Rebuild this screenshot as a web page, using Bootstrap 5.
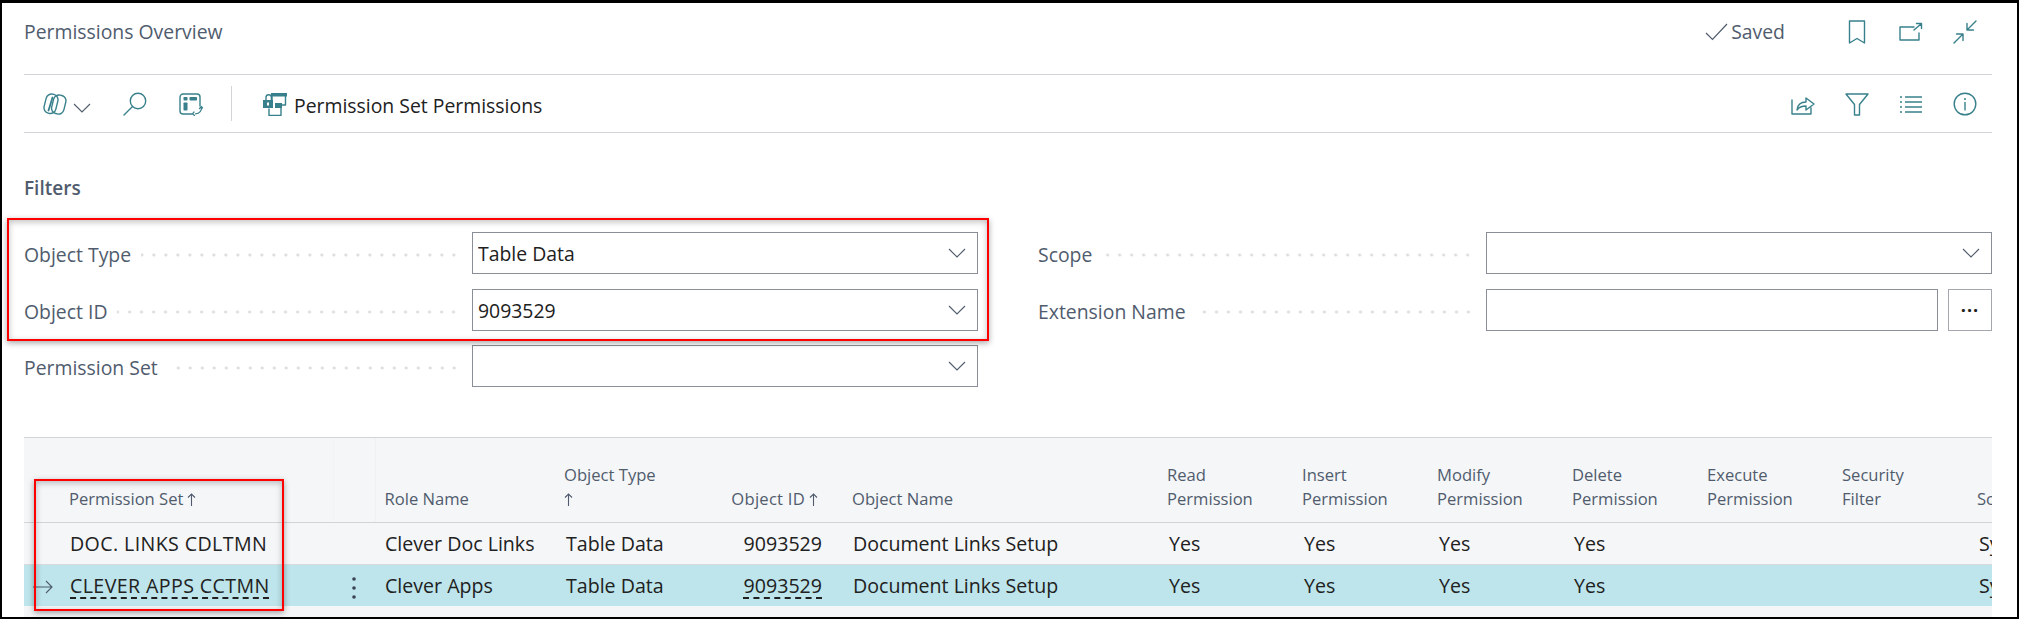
<!DOCTYPE html>
<html lang="en">
<head>
<meta charset="utf-8">
<title>Permissions Overview</title>
<link href="https://cdn.jsdelivr.net/npm/bootstrap@5.3.0/dist/css/bootstrap.min.css" rel="stylesheet">
<style>
html,body{margin:0;height:619px;overflow:hidden;background:#fff}
body{font-family:"Open Sans","Noto Sans",sans-serif;font-size:19.4px;color:#212121}
.bc-frame{position:relative;height:619px;box-sizing:border-box;border:solid #000;border-width:3px 2px 2px 2px;padding:0 25px 0 22px;display:flex;flex-direction:column;overflow:hidden;background:#fff}
.bc-ico{width:24px;height:24px;flex:none;fill:none;stroke:#38808b;stroke-width:1.4;stroke-linecap:round;stroke-linejoin:round}
.bc-ico .solid{fill:#38808b;stroke:none}
.bc-title-row{height:72px;border-bottom:1px solid #d2d4d8;padding-top:16px}
.bc-title{font-size:19.4px;line-height:26px;color:#505c6d}
.bc-saved{color:#505c6d;line-height:26px;margin-right:60px}
.bc-check{width:23px;height:18px;fill:none;stroke:#505c6d;stroke-width:1.2;margin-right:3px}
.bc-iconset{gap:30px;margin-right:15px}
.bc-tool-row{height:58px;border-bottom:1px solid #d2d4d8;padding-left:19px}
.bc-chev{width:18px;height:10px;fill:none;stroke:#505c6d;stroke-width:1.1;margin:8px 32px 0 6px}
.bc-gap{margin-left:32px}
.bc-sep{width:1px;height:35px;background:#d2d4d8;margin:0 31px 0 28px}
.bc-action{color:#212121;line-height:26px;margin:4px 0 0 7px}
.bc-h{font-size:19px;font-weight:600;color:#505c6d;line-height:26px;margin:42px 0 31px}
.bc-filters{gap:60px}
.bc-fcol{width:954px;gap:14.5px}
.bc-field{height:42px}
.bc-label{color:#505c6d;line-height:42px;margin-top:2px;white-space:nowrap}
.bc-dots{flex:1 1 auto;margin:4px 12px 0 10px;background:radial-gradient(circle,#dcdcdc 1.4px,transparent 1.7px) right center/12px 100% repeat-x}
.bc-select,.bc-input{width:506px;height:42px;flex:none;border:1px solid #8a8e96;border-radius:0;padding:2px 34px 0 5px;font-size:19.4px;color:#212121;box-shadow:none}
.bc-select{background-image:url("data:image/svg+xml,%3Csvg xmlns='http://www.w3.org/2000/svg' viewBox='0 0 18 10'%3E%3Cpath d='M1 1l8 8 8-8' fill='none' stroke='%23505c6d' stroke-width='1.1'/%3E%3C/svg%3E");background-position:right 11px center;background-size:18px 10px}
.bc-input-short{width:452px}
.bc-more{width:44px;height:42px;margin-left:10px;border:1px solid #a4a7ad;border-radius:0;padding:0;line-height:1;font-size:18px;font-weight:700;letter-spacing:1px;color:#212121;background:#fff}
.bc-grid{margin-top:50px;flex:1 1 auto;overflow:hidden;background:#f5f6f8;border-top:1px solid #d2d4d8}
.bc-table{--bs-table-bg:transparent;table-layout:fixed;width:2081px;margin:0;color:#212121}
.bc-table th{height:84px;vertical-align:bottom;font-weight:400;font-size:16.6px;line-height:24px;color:#505c6d;padding:0 8px 11px 7px;border:0;border-bottom:1px solid #d2d4d8}
.bc-table td{height:42px;vertical-align:middle;font-size:19.6px;line-height:24px;padding:2px 9px 0;border:0;border-bottom:1px solid #d8dade;white-space:nowrap;overflow:hidden}
.bc-table .bc-sel>td{--bs-table-bg:#bde5eb;border-bottom:0}
.bc-table th.bc-rule{border-left:1px solid #eef0f2;padding-left:9px}
.bc-table th.bc-rule-faint{border-left:1px solid #f2f3f6}
.bc-table .bc-mark{padding:3px 0 0 9px}
.bc-table .bc-num{text-align:right;padding-right:22px}
.bc-table th.bc-numh{text-align:right;padding-right:26px;white-space:nowrap;letter-spacing:.25px}
.bc-table th.bc-perm{padding-left:8px}
.bc-table td.bc-caps{letter-spacing:.4px}
.bc-table td.bc-first{padding-left:10px}
.bc-table .bc-menu{padding:3px 0 0;text-align:center}
.bc-up{width:9px;height:13px;fill:none;stroke:#505c6d;stroke-width:1.1;margin-left:4px;vertical-align:-1px}
.bc-link{text-decoration:underline dashed 1.5px #212121;text-underline-offset:4px}
.bc-arrow{width:20px;height:14px;fill:none;stroke:#505c6d;stroke-width:1.1;display:block}
.bc-kebab{width:4px;height:22px;fill:#3a4350;display:inline-block;vertical-align:middle}
.bc-callout{position:absolute;border:2px solid #f00;box-shadow:0 2px 6px rgba(0,0,0,.35),inset 0 2px 6px rgba(0,0,0,.25);pointer-events:none}
.bc-callout-a{left:5px;top:215px;width:982px;height:123px}
.bc-callout-b{left:32px;top:476px;width:250px;height:132px}
</style>
</head>
<body>
<div class="bc-frame">
  <div class="bc-title-row d-flex justify-content-between align-items-start">
    <div class="bc-title">Permissions Overview</div>
    <div class="d-flex align-items-center">
      <svg class="bc-check" viewBox="0 0 23 18"><path d="M1 10l6.500 6.500L22 1"/></svg>
      <span class="bc-saved">Saved</span>
      <div class="d-flex bc-iconset">
        <svg class="bc-ico" viewBox="0 0 24 24"><path d="M4.500 1h15v22l-7.500-4.500L4.500 23z"/></svg>
        <svg class="bc-ico" viewBox="0 0 24 24"><path d="M15 7H1v13h19v-7M15 10l7-6M17.500 3.500h5V8.500"/></svg>
        <svg class="bc-ico" viewBox="0 0 24 24"><path d="M23 1l-9 9M14 3.500V10h6.500M1 23l9-9M3.500 14H10v6.500"/></svg>
      </div>
    </div>
  </div>

  <div class="bc-tool-row d-flex align-items-center justify-content-between">
    <div class="d-flex align-items-center">
      <svg class="bc-ico" viewBox="0 0 24 24"><rect x="2" y="2" width="12" height="19.500" rx="5.500" transform="rotate(14 8 11.700)"/><rect x="9.500" y="3" width="12.500" height="19" rx="5.500" transform="rotate(14 15.700 12.500)"/><path d="M9.500 5.500l-4 13" stroke-width="1.800"/></svg>
      <svg class="bc-chev" viewBox="0 0 18 10"><path d="M1 1l8 8 8-8"/></svg>
      <svg class="bc-ico" viewBox="0 0 24 24"><circle cx="15" cy="9" r="7.700"/><path d="M9.500 14.500L1 23"/></svg>
      <svg class="bc-ico bc-gap" viewBox="0 0 24 24"><path d="M21 14V5a3 3 0 0 0-3-3H4a3 3 0 0 0-3 3v14a3 3 0 0 0 3 3h9"/><rect class="solid" x="4.500" y="5" width="4" height="3.500" rx=".8"/><rect class="solid" x="10.500" y="5" width="7.500" height="3.500" rx=".8"/><rect class="solid" x="4.500" y="10.500" width="4" height="8" rx=".8"/><path d="M22.500 15c.4 3.500-1.800 6.500-6 6.800M20.500 16.500l2-2 1.500 2M15 20l-1.500 1.800 2 1.700" stroke-width="1.200"/></svg>
      <span class="bc-sep"></span>
      <svg class="bc-ico" viewBox="0 0 24 24"><rect class="solid" x="8" y="1" width="16" height="3.500"/><path d="M22.500 4v9H18M9 4v5"/><path d="M3 8V5.500a2.700 2.700 0 0 1 5.400 0V8"/><rect class="solid" x="0" y="8" width="10" height="8"/><rect x="4" y="10.500" width="2" height="3" fill="#fff" stroke="none"/><rect class="solid" x="12" y="11" width="7" height="5"/><path d="M6 17v6.500h12V16"/></svg>
      <span class="bc-action">Permission Set Permissions</span>
    </div>
    <div class="d-flex bc-iconset">
      <svg class="bc-ico" viewBox="0 0 24 24"><path d="M1 8v14h19v-6M6 18c.5-5 4-8 9-8V6l8 6-8 6v-4c-4 0-7 1-9 4z"/></svg>
      <svg class="bc-ico" viewBox="0 0 24 24"><path d="M1 2h22l-8.500 10.500V23h-5V12.500z"/></svg>
      <svg class="bc-ico" viewBox="0 0 24 24"><path d="M6 5h17M6 10h17M6 15h17M6 20h17M1 5h2M1 10h2M1 15h2M1 20h2" stroke-width="1.500" stroke-linecap="butt"/></svg>
      <svg class="bc-ico" viewBox="0 0 24 24"><circle cx="12" cy="12" r="10.800"/><path d="M12 10.500V18"/><circle class="solid" cx="12" cy="7" r="1"/></svg>
    </div>
  </div>

  <div class="bc-h">Filters</div>

  <div class="d-flex bc-filters">
    <div class="bc-fcol d-flex flex-column">
      <div class="bc-field d-flex"><span class="bc-label">Object Type</span><span class="bc-dots"></span>
        <select class="form-select bc-select"><option>Table Data</option></select></div>
      <div class="bc-field d-flex"><span class="bc-label">Object ID</span><span class="bc-dots"></span>
        <select class="form-select bc-select"><option>9093529</option></select></div>
      <div class="bc-field d-flex"><span class="bc-label">Permission Set</span><span class="bc-dots"></span>
        <select class="form-select bc-select"><option></option></select></div>
    </div>
    <div class="bc-fcol d-flex flex-column">
      <div class="bc-field d-flex"><span class="bc-label">Scope</span><span class="bc-dots"></span>
        <select class="form-select bc-select"><option></option></select></div>
      <div class="bc-field d-flex"><span class="bc-label">Extension Name</span><span class="bc-dots"></span>
        <input class="form-control bc-input bc-input-short" type="text"><button class="btn bc-more" type="button">···</button></div>
    </div>
  </div>

  <div class="bc-grid">
    <table class="table table-borderless bc-table">
      <colgroup>
        <col style="width:37px"><col style="width:272px"><col style="width:42px"><col style="width:182px"><col style="width:163px"><col style="width:124px"><col style="width:316px"><col style="width:135px"><col style="width:135px"><col style="width:135px"><col style="width:135px"><col style="width:135px"><col style="width:135px"><col style="width:135px">
      </colgroup>
      <thead>
        <tr>
          <th></th>
          <th class="bc-perm">Permission Set<svg class="bc-up" viewBox="0 0 9 13"><path d="M4.500 13V1M1 4.500L4.500 1 8 4.500"/></svg></th>
          <th class="bc-rule-faint"></th>
          <th class="bc-rule">Role Name</th>
          <th>Object Type<br><svg class="bc-up ms-0" viewBox="0 0 9 13"><path d="M4.500 13V1M1 4.500L4.500 1 8 4.500"/></svg></th>
          <th class="bc-numh">Object ID<svg class="bc-up" viewBox="0 0 9 13"><path d="M4.500 13V1M1 4.500L4.500 1 8 4.500"/></svg></th>
          <th class="bc-perm">Object Name</th>
          <th>Read<br>Permission</th>
          <th>Insert<br>Permission</th>
          <th>Modify<br>Permission</th>
          <th>Delete<br>Permission</th>
          <th>Execute<br>Permission</th>
          <th>Security<br>Filter</th>
          <th>Scope</th>
        </tr>
      </thead>
      <tbody>
        <tr>
          <td class="bc-mark"></td><td class="bc-caps">DOC. LINKS CDLTMN</td><td class="bc-menu"></td><td class="bc-first">Clever Doc Links</td><td>Table Data</td><td class="bc-num">9093529</td><td>Document Links Setup</td><td>Yes</td><td>Yes</td><td>Yes</td><td>Yes</td><td></td><td></td><td>System</td>
        </tr>
        <tr class="bc-sel">
          <td class="bc-mark"><svg class="bc-arrow" viewBox="0 0 20 14"><path d="M0 7h19M13 1l6 6-6 6"/></svg></td><td class="bc-caps"><span class="bc-link">CLEVER APPS CCTMN</span></td><td class="bc-menu"><svg class="bc-kebab" viewBox="0 0 4 22"><circle cx="2" cy="2" r="1.800"/><circle cx="2" cy="11" r="1.800"/><circle cx="2" cy="20" r="1.800"/></svg></td><td class="bc-first">Clever Apps</td><td>Table Data</td><td class="bc-num"><span class="bc-link">9093529</span></td><td>Document Links Setup</td><td>Yes</td><td>Yes</td><td>Yes</td><td>Yes</td><td></td><td></td><td>System</td>
        </tr>
      </tbody>
    </table>
  </div>

  <div class="bc-callout bc-callout-a"></div>
  <div class="bc-callout bc-callout-b"></div>
</div>
<script src="https://cdn.jsdelivr.net/npm/bootstrap@5.3.0/dist/js/bootstrap.bundle.min.js"></script>
</body>
</html>
